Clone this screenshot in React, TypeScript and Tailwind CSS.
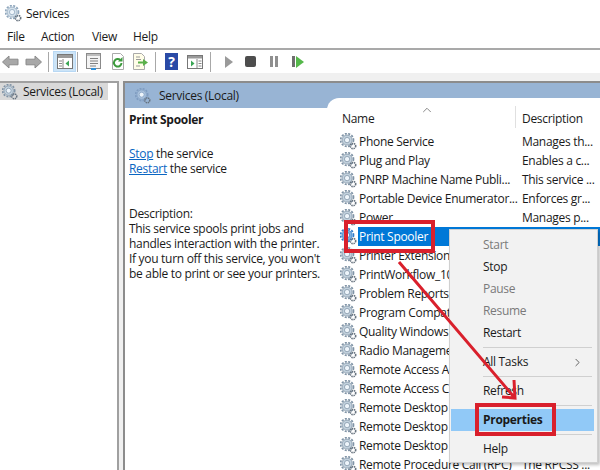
import { ChevronRight, ChevronUp } from "lucide-react";

const services = [
  { name: "Phone Service", desc: "Manages th..." },
  { name: "Plug and Play", desc: "Enables a c..." },
  { name: "PNRP Machine Name Publi...", desc: "This service ..." },
  { name: "Portable Device Enumerator...", desc: "Enforces gr..." },
  { name: "Power", desc: "Manages p..." },
  { name: "Print Spooler", desc: "", selected: true },
  { name: "Printer Extensions and Notifications", desc: "", covered: true },
  { name: "PrintWorkflow_10a1b2", desc: "", covered: true },
  { name: "Problem Reports and Solutions", desc: "", covered: true },
  { name: "Program Compatibility Assistant", desc: "", covered: true },
  { name: "Quality Windows Audio Video", desc: "", covered: true },
  { name: "Radio Management Service", desc: "", covered: true },
  { name: "Remote Access Auto Connection", desc: "", covered: true },
  { name: "Remote Access Connection", desc: "", covered: true },
  { name: "Remote Desktop Configuration", desc: "", covered: true },
  { name: "Remote Desktop Services", desc: "", covered: true },
  { name: "Remote Desktop Services UserMode", desc: "", covered: true },
  { name: "Remote Procedure Call (RPC)", desc: "The RPCSS ..." },
];

const Gear = ({ className = "", tone = "#7f93a6", body = "#c3d2de" }: { className?: string; tone?: string; body?: string }) => (
  <svg viewBox="0 0 18 18" className={className}>
    <circle cx="7.500" cy="7.500" r="6.800" fill="none" stroke={tone} strokeWidth="1.800" strokeDasharray="2.200 1.400" />
    <circle cx="7.500" cy="7.500" r="5.300" fill={body} stroke={tone} strokeWidth="0.800" />
    <circle cx="7.500" cy="7.500" r="2.800" fill="#eef5fb" stroke={tone} strokeWidth="0.800" />
    <circle cx="13.800" cy="13.800" r="2.800" fill="none" stroke="#66727e" strokeWidth="1.700" strokeDasharray="1.500 0.800" />
  </svg>
);

const Sep = () => <div className="h-[20px] w-px bg-[#a8a8a8]" />;

const Toolbar = () => (
  <div className="flex h-[23px] items-center bg-white">
    <svg viewBox="0 0 40 14" className="ml-[2px] h-[14px] w-[40px]">
      <path d="M.5 7 7 1v3.200h9v5.600H7V13z" fill="#a8a8a8" stroke="#8a8a8a" />
      <path d="M39.500 7 33 1v3.200h-9v5.600h9V13z" fill="#a8a8a8" stroke="#8a8a8a" />
    </svg>
    <div className="ml-[6px]"><Sep /></div>
    <div className="ml-[4px] flex h-[21px] w-[23px] items-center justify-center border border-[#b8d8f4] bg-[#cce4f7]">
      <svg viewBox="0 0 16 15" className="h-[15px] w-[16px]">
        <rect x="0.500" y="0.500" width="15" height="14" fill="#fff" stroke="#777" />
        <rect x="1" y="1" width="14" height="3" fill="#9a9a9a" />
        <path d="M6 5v9M2 7h3M2 9.500h3M2 12h3" stroke="#888" />
        <path d="M12 6.500v6L8.500 9.500z" fill="#3aa655" />
      </svg>
    </div>
    <div className="ml-[1px]"><Sep /></div>
    <svg viewBox="0 0 15 17" className="ml-[8px] h-[17px] w-[15px]">
      <rect x="0.500" y="0.500" width="14" height="15" fill="#f4f4f4" stroke="#8a8a8a" />
      <rect x="1" y="1" width="13" height="2" fill="#bdbdbd" />
      <path d="M4 5.500h8M4 8h8M4 10.500h8M4 13h6" stroke="#808080" />
      <path d="M5 16h5" stroke="#2f8fd8" strokeWidth="2" />
    </svg>
    <svg viewBox="0 0 14 17" className="ml-[10px] h-[17px] w-[14px]">
      <path d="M1.500.5h8l3 3v13h-11z" fill="#fff" stroke="#aaa" />
      <path d="M10.500 10a3.800 3.800 0 1 1-1.200-3" fill="none" stroke="#3c9a3c" strokeWidth="2" />
      <path d="M11.500 4v4.500H7z" fill="#3c9a3c" />
    </svg>
    <svg viewBox="0 0 16 17" className="ml-[7px] h-[17px] w-[16px]">
      <path d="M1.500.5h8l3 3v13h-11z" fill="#fffde8" stroke="#aaa" />
      <path d="M4 4h4M4 6.500h5M4 13h4" stroke="#999" />
      <path d="M6 8.500h5V6l5 3.500-5 3.500v-2.500H6z" fill="#5bb04a" />
    </svg>
    <div className="ml-[7px]"><Sep /></div>
    <div className="ml-[9px] flex h-[17px] w-[13px] items-center justify-center bg-[#2a4aa6] text-[14px] font-bold leading-none text-white">
      ?
    </div>
    <svg viewBox="0 0 16 14" className="ml-[9px] h-[14px] w-[16px]">
      <rect x="0.500" y="0.500" width="15" height="13" fill="#fff" stroke="#777" />
      <rect x="1" y="1" width="14" height="2.500" fill="#9a9a9a" />
      <path d="M10 4v9M11.500 6h3M11.500 8.500h3M11.500 11h3" stroke="#888" />
      <path d="M4 5.500v6L7.500 8.500z" fill="#3aa655" />
    </svg>
    <div className="ml-[7px]"><Sep /></div>
    <div className="ml-[14px] h-0 w-0 border-y-[6px] border-l-[8px] border-y-transparent border-l-[#9a9a9a]" />
    <div className="ml-[12px] h-[11px] w-[11px] rounded-[2px] bg-[#4d4d4d]" />
    <div className="ml-[14px] flex gap-[2px]">
      <div className="h-[11px] w-[3px] bg-[#8f8f8f]" />
      <div className="h-[11px] w-[3px] bg-[#8f8f8f]" />
    </div>
    <div className="ml-[14px] flex items-center gap-[1px]">
      <div className="h-[11px] w-[3px] bg-[#6f6f6f]" />
      <div className="h-0 w-0 border-y-[6px] border-l-[8px] border-y-transparent border-l-[#55b84a]" />
    </div>
  </div>
);

const MenuRow = ({ label, muted, bold, active, chevron }: { label: string; muted?: boolean; bold?: boolean; active?: boolean; chevron?: boolean }) => (
  <div className={`flex h-[22px] items-center justify-between pl-[32px] pr-[10px] ${active ? "bg-[#91c9f7]" : ""} ${muted ? "text-[#7a7a7a]" : ""} ${bold ? "font-bold" : ""}`}>
    <span>{label}</span>
    {chevron && <ChevronRight className="h-[13px] w-[13px] text-[#444]" strokeWidth={1.5} />}
  </div>
);

const MenuSep = () => <div className="my-[3px] ml-[32px] mr-[2px] h-px bg-[#d0d0d0]" />;

export default function App() {
  return (
    <div className="relative h-[470px] w-[600px] overflow-hidden bg-white font-['Open_Sans','Liberation_Sans',sans-serif] text-[12px] tracking-[-0.3px] text-[#1a1a1a]">
      <div className="flex h-[26px] items-center pl-[5px] pt-[1px]">
        <Gear className="h-[17px] w-[17px]" tone="#8ea6bc" body="#d5e2ec" />
        <span className="ml-[4px]">Services</span>
      </div>
      <div className="flex h-[24px] items-center border-b-2 border-[#a9a9a9] pl-[7px]">
        <span className="w-[34px]">File</span>
        <span className="w-[51px]">Action</span>
        <span className="w-[41px]">View</span>
        <span>Help</span>
      </div>
      <Toolbar />
      <div className="h-[8px] bg-[#f0f0f0]" />
      <div className="flex h-[389px] bg-[#f0f0f0]">
        <div className="w-[119px] border-r-2 border-t-2 border-[#a0a0a0] bg-white">
          <div className="flex h-[17px] w-[108px] items-center bg-[#d9d9d9] pl-[2px]">
            <Gear className="h-[16px] w-[16px]" />
            <span className="ml-[5px] whitespace-nowrap">Services (Local)</span>
          </div>
        </div>
        <div className="ml-[4px] flex flex-1 flex-col border-l-2 border-t-2 border-[#8c8c8c]">
          <div className="flex h-[25px] shrink-0 items-center bg-[#98b4d4] pl-[10px]">
            <Gear className="h-[16px] w-[16px]" tone="#7f9cc0" body="#a9c1dc" />
            <span className="ml-[8px]">Services (Local)</span>
          </div>
          <div className="flex min-h-0 flex-1 bg-white">
            <div className="w-[202px] pl-[4px] pt-[4px] leading-[15px]">
              <div className="font-bold">Print Spooler</div>
              <div className="mt-[19px]">
                <span className="text-[#0a66c2] underline">Stop</span> the service
              </div>
              <div>
                <span className="text-[#0a66c2] underline">Restart</span> the service
              </div>
              <div className="mt-[30px]">Description:</div>
              <div className="w-[196px]">
                This service spools print jobs and handles interaction with the printer. If you turn off this service, you won't be able to print or see your printers.
              </div>
            </div>
            <div className="relative z-10 -mt-[10px] flex-1 overflow-hidden rounded-tl-[12px] bg-white">
              <div className="relative flex h-[34px] items-end pb-[4px]">
                <span className="ml-[15px] w-[173px]">Name</span>
                <div className="h-[22px] w-px bg-[#e0e0e0]" />
                <span className="ml-[6px]">Description</span>
                <ChevronUp className="absolute left-[93px] top-[5px] h-[14px] w-[14px] text-[#777]" strokeWidth={1.5} />
              </div>
              {services.map((s) => (
                <div key={s.name} className="flex h-[19px] items-center">
                  <Gear className="ml-[13px] h-[17px] w-[17px] shrink-0" tone={s.selected ? "#2f7cc9" : "#7f93a6"} body={s.selected ? "#7fb2e0" : "#c3d2de"} />
                  <div className={`ml-[1px] flex h-[19px] flex-1 items-center pl-[1px] ${s.selected ? "bg-[#0078d7] text-white" : ""}`}>
                    <span className={`${s.covered ? "w-[90px]" : "w-[163px]"} shrink-0 overflow-hidden whitespace-nowrap`}>{s.name}</span>
                    <span className="whitespace-nowrap">{s.desc}</span>
                  </div>
                </div>
              ))}
            </div>
          </div>
        </div>
      </div>

      <div className="absolute left-[449px] top-[229px] z-20 w-[149px] border border-[#d0d0d0] bg-[#f2f2f2] pb-[2px] pl-[1px] pr-[3px] pt-[4px] shadow-[2px_2px_3px_rgba(0,0,0,0.25)]">
        <MenuRow label="Start" muted />
        <MenuRow label="Stop" />
        <MenuRow label="Pause" muted />
        <MenuRow label="Resume" muted />
        <MenuRow label="Restart" />
        <MenuSep />
        <MenuRow label="All Tasks" chevron />
        <MenuSep />
        <MenuRow label="Refresh" />
        <MenuSep />
        <MenuRow label="Properties" bold active />
        <MenuSep />
        <MenuRow label="Help" />
      </div>

      <div className="absolute left-[344px] top-[220px] z-30 h-[33px] w-[91px] border-4 border-[#d9202c]" />
      <div className="absolute left-[475px] top-[403px] z-30 h-[33px] w-[81px] border-4 border-[#d9202c]" />
      <svg viewBox="0 0 600 470" className="pointer-events-none absolute left-0 top-0 z-30 h-[470px] w-[600px]">
        <path d="M399 262 514 397M502 397l13 1-1-18" fill="none" stroke="#d9202c" strokeWidth="3" />
      </svg>
    </div>
  );
}
